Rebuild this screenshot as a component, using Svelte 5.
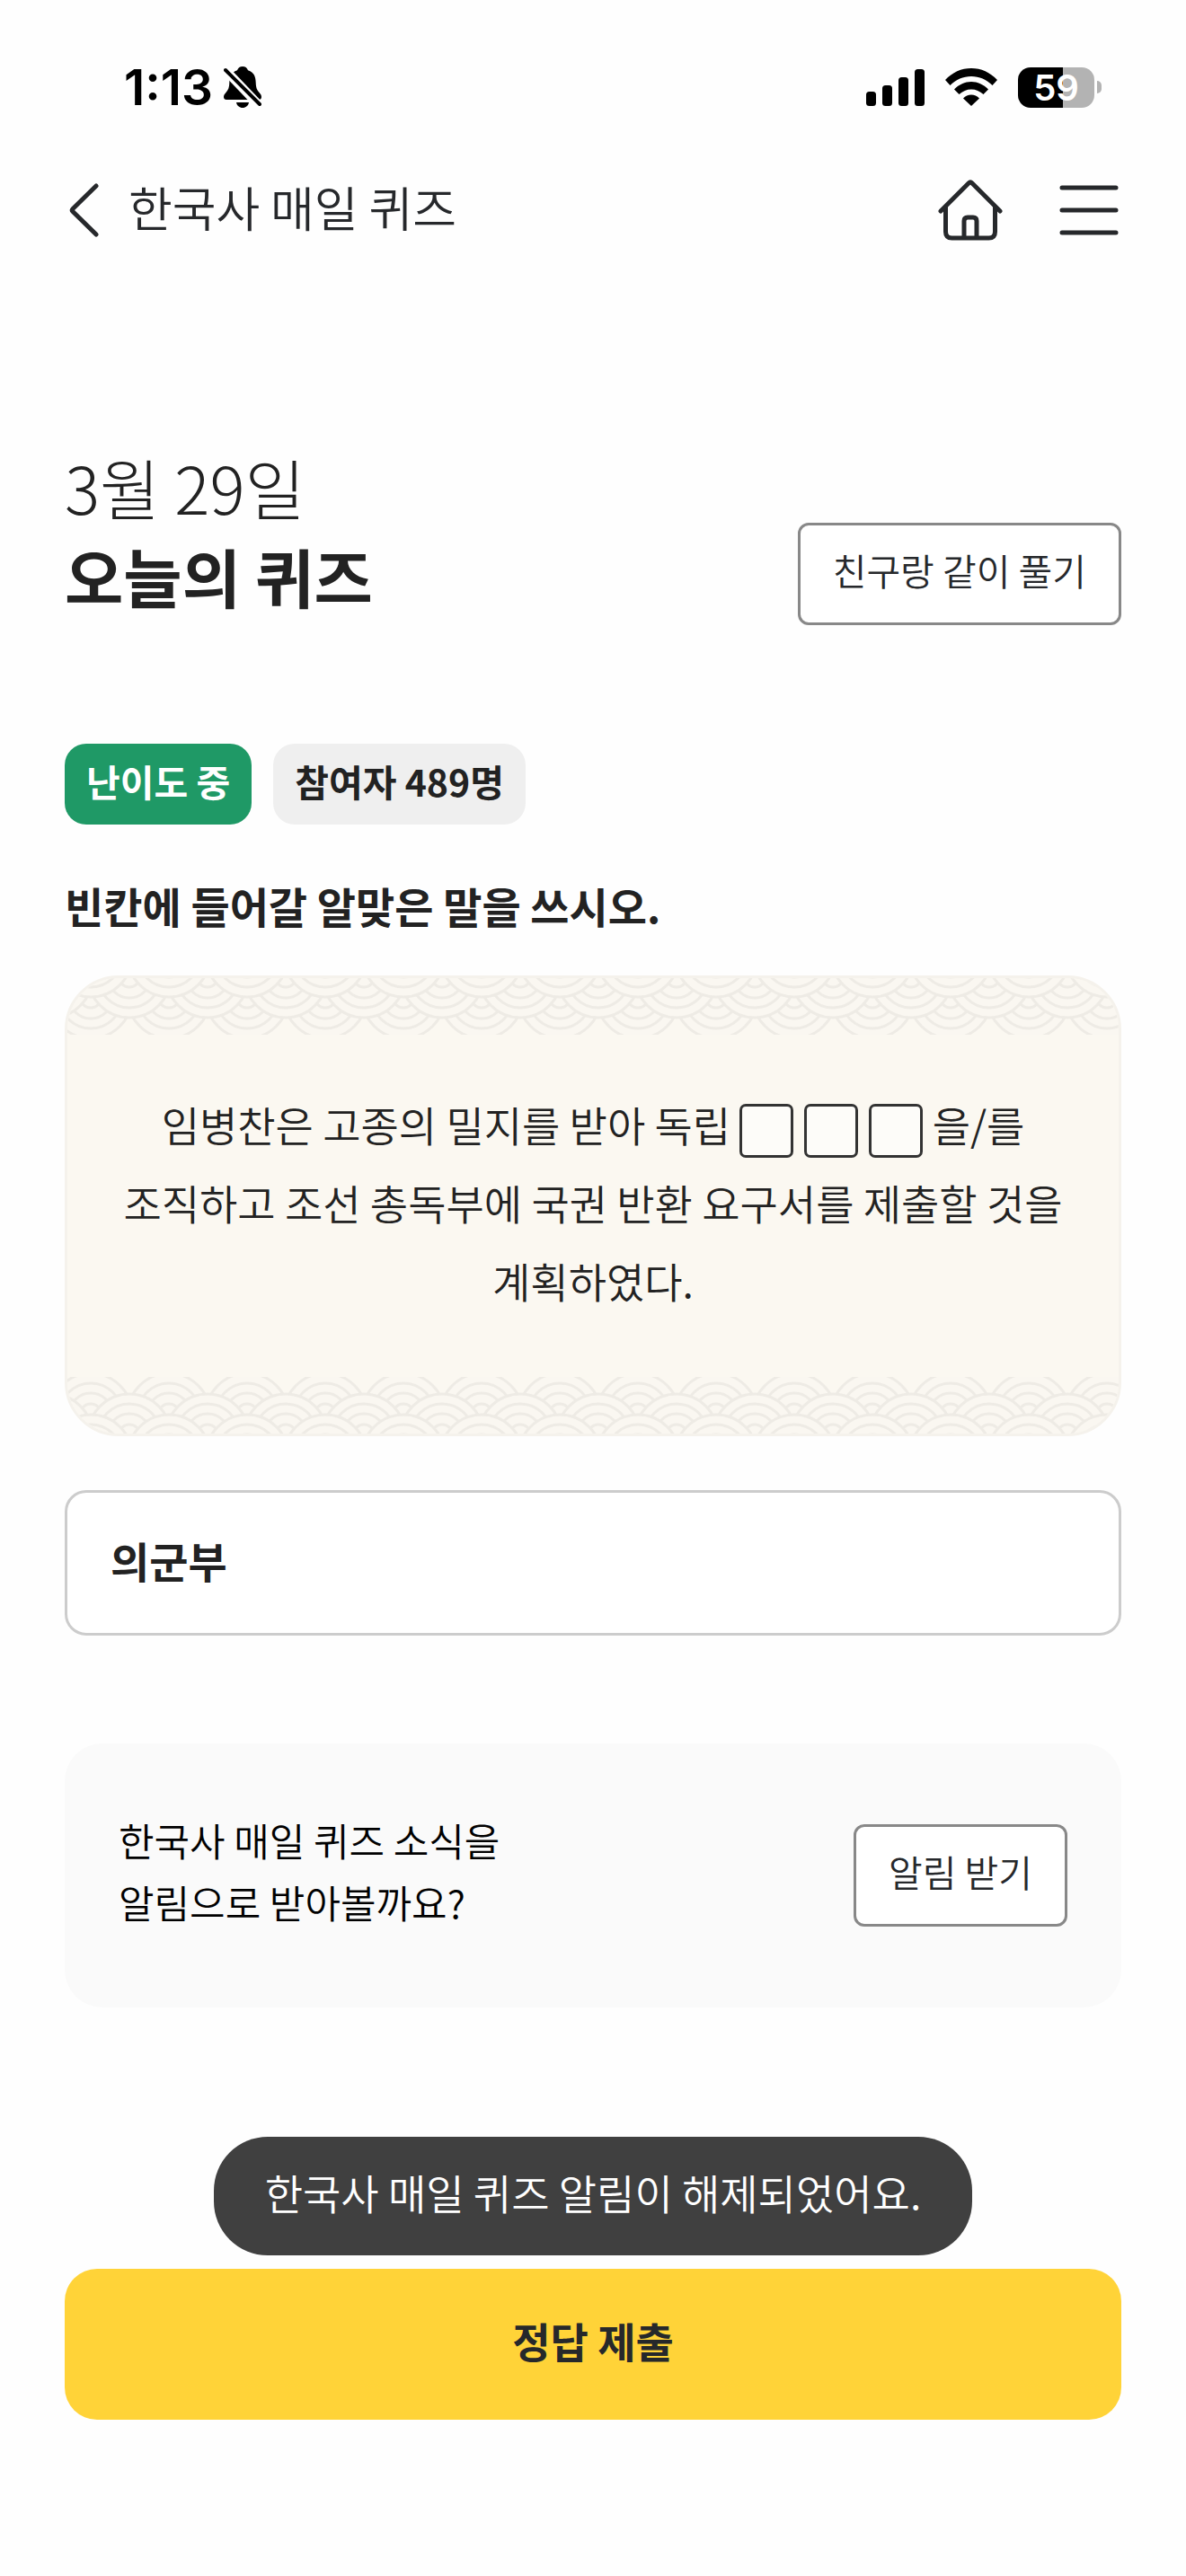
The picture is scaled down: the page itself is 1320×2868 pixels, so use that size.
<script lang="ts">
	let answer = $state('의군부');

	const participants = 489;
	const blanks = [1, 2, 3];

	// wave rows are painted bottom row first so that each upper row covers the one below
	const waveRows = [
		{ y: 21, xs: [-61, 26, 113] },
		{ y: -2, xs: [-18, 69, 156] },
		{ y: -25, xs: [-61, 26, 113] }
	];
	const waveRings = [46, 35, 24, 12];
</script>

{#snippet waves(id: string)}
	<svg class="waves {id}" aria-hidden="true">
		<defs>
			<pattern {id} width="87" height="63" patternUnits="userSpaceOnUse">
				{#each waveRows as row}
					{#each row.xs as x}
						{#each waveRings as r}
							<circle cx={x} cy={row.y} {r} />
						{/each}
					{/each}
				{/each}
			</pattern>
		</defs>
		<rect width="100%" height="63" fill="url(#{id})" />
	</svg>
{/snippet}

<div class="screen">
	<div class="status-bar">
		<div class="status-left">
			<span class="time">1:13</span>
			<svg width="42" height="46" viewBox="0 0 42 46" aria-hidden="true">
				<path d="M21 0c-3 0-5 1.600-6 4.200C8 6.500 6.500 11.500 6.300 18c-.2 6-1.300 8-4 11.300C.8 31 0 32.300 0 34c0 1.800 1.200 3 3 3h36c1.800 0 3-1.200 3-3 0-1.700-.8-3-2.300-4.700-2.700-3.300-3.800-5.300-4-11.300C35.500 11.500 34 6.500 27 4.200 26 1.600 24 0 21 0z" />
				<path d="M14 40h14c-.5 3.500-3.500 6-7 6s-6.500-2.500-7-6z" />
				<path d="M-1 1L42 46" stroke="#fff" stroke-width="10" />
				<path d="M2 4l38 38" stroke="#000" stroke-width="4" stroke-linecap="round" />
			</svg>
		</div>
		<div class="status-right">
			<svg width="65" height="41" viewBox="0 0 65 41" aria-hidden="true">
				<rect x="0" y="25" width="11" height="16" rx="3.500" />
				<rect x="18" y="18" width="11" height="23" rx="3.500" />
				<rect x="36" y="9" width="11" height="32" rx="3.500" />
				<rect x="54" y="0" width="11" height="41" rx="3.500" />
			</svg>
			<svg width="58" height="42" viewBox="0 0 58 42" aria-hidden="true">
				<path d="M0 13C8 4.500 18 0 29 0s21 4.500 29 13l-5.500 6C46 12.500 38 9 29 9S12 12.500 5.500 19z" />
				<path d="M10 23.500C15.500 18 22 15 29 15s13.500 3 19 8.500l-5.500 5.500C38.500 25.500 34 23.500 29 23.500S19.500 25.500 15.500 29z" />
				<path d="M20 33.500c2.500-2.500 5.500-4 9-4s6.500 1.500 9 4L29 42z" />
			</svg>
			<div class="battery">
				<div class="battery-body">59</div>
				<div class="battery-tip"></div>
			</div>
		</div>
	</div>

	<header>
		<button class="icon-btn" type="button" aria-label="뒤로">
			<svg width="33" height="60" viewBox="0 0 33 60" aria-hidden="true">
				<path d="M30 3L4 28.500q-1.500 1.500 0 3L30 57" />
			</svg>
		</button>
		<h1>한국사 매일 퀴즈</h1>
		<a class="icon-btn home" href="/" aria-label="홈">
			<svg width="72" height="68" viewBox="0 0 72 68" aria-hidden="true">
				<path d="M3 35L34 4q2-2 4 0l31 31" />
				<path d="M8.500 31v27q0 7 7 7h41q7 0 7-7V31" />
				<path d="M29 64V46q0-4 4-4h6q4 0 4 4v18" />
			</svg>
		</a>
		<button class="icon-btn" type="button" aria-label="메뉴">
			<svg width="66" height="56" viewBox="0 0 66 56" aria-hidden="true">
				<path d="M3 3h60M3 28h60M3 53h60" />
			</svg>
		</button>
	</header>

	<main>
		<div class="title-row">
			<h2><span>3월 29일</span>오늘의 퀴즈</h2>
			<button class="outline-btn" type="button">친구랑 같이 풀기</button>
		</div>

		<div class="badges">
			<span class="badge level">난이도 중</span>
			<span class="badge">참여자 {participants}명</span>
		</div>

		<label class="question" for="answer">빈칸에 들어갈 알맞은 말을 쓰시오.</label>

		<section class="quiz-card">
			{@render waves('top')}
			<p>
				임병찬은 고종의 밀지를 받아 독립
				<span class="blanks">
					{#each blanks as blank (blank)}
						<span class="blank"></span>
					{/each}
				</span>
				을/를 조직하고 조선 총독부에 국권 반환 요구서를 제출할 것을 계획하였다.
			</p>
			{@render waves('bottom')}
		</section>

		<input id="answer" type="text" bind:value={answer} />

		<section class="notice">
			<p>한국사 매일 퀴즈 소식을<br />알림으로 받아볼까요?</p>
			<button class="outline-btn" type="button">알림 받기</button>
		</section>

		<div class="toast" role="status">한국사 매일 퀴즈 알림이 해제되었어요.</div>

		<button class="submit" type="button">정답 제출</button>
	</main>
</div>

<style>
	:global(body) {
		margin: 0;
		background: #fefefe;
	}

	.screen {
		font-family: 'Noto Sans CJK KR', sans-serif;
		font-weight: 350;
		color: #222;
		padding-bottom: 174px;
		word-break: keep-all;
	}

	button,
	input {
		font: inherit;
		color: inherit;
		box-sizing: border-box;
	}

	button {
		cursor: pointer;
	}

	h1,
	h2,
	p {
		margin: 0;
		font-weight: inherit;
	}

	.status-bar {
		display: flex;
		justify-content: space-between;
		align-items: center;
		height: 48px;
		padding: 73px 94px 0 138px;
		font-family: Inter, sans-serif;
		color: #000;
	}

	.status-left,
	.status-right {
		display: flex;
		align-items: center;
	}

	.status-left {
		gap: 12px;
	}

	.status-right {
		gap: 23px;
	}

	.time {
		font-size: 55px;
		line-height: 48px;
		font-weight: 600;
	}

	.battery {
		display: flex;
		align-items: center;
		gap: 3px;
	}

	.battery-body {
		width: 85px;
		height: 45px;
		border-radius: 14px;
		background: linear-gradient(90deg, #000 59%, #b3b3b3 59%);
		color: #fff;
		font-size: 40px;
		font-weight: 600;
		line-height: 45px;
		text-align: center;
	}

	.battery-tip {
		width: 5px;
		height: 14px;
		border-radius: 0 5px 5px 0;
		background: #b3b3b3;
	}

	header {
		display: flex;
		align-items: center;
		height: 96px;
		padding: 65px 75px 0 77px;
		color: #26282b;
	}

	h1 {
		flex: 1;
		margin-left: 33px;
		padding-bottom: 8px;
		font-size: 53px;
		line-height: 72px;
	}

	.icon-btn {
		display: flex;
		padding: 0;
		border: none;
		background: none;
		color: inherit;
	}

	.icon-btn svg {
		fill: none;
		stroke: currentColor;
		stroke-width: 5;
		stroke-linecap: round;
		stroke-linejoin: round;
	}

	.home {
		margin-right: 63px;
	}

	main {
		display: flex;
		flex-direction: column;
		padding: 210px 72px 0;
	}

	.title-row {
		display: flex;
		justify-content: space-between;
		align-items: flex-end;
	}

	h2 {
		font-size: 71px;
		line-height: 99px;
		font-weight: 700;
		padding-bottom: 6px;
	}

	h2 span {
		display: block;
		font-size: 73px;
		font-weight: 300;
	}

	.outline-btn {
		height: 114px;
		padding: 0 36px 11px;
		border: 3px solid #888;
		border-radius: 12px;
		background: #fff;
		color: #26282b;
		font-size: 41px;
		line-height: 60px;
	}

	.badges {
		display: flex;
		gap: 24px;
		margin-top: 132px;
	}

	.badge {
		padding: 11px 24px 19px;
		border-radius: 24px;
		background: #efefef;
		font-size: 41px;
		line-height: 60px;
		font-weight: 700;
	}

	.level {
		background: #1f9966;
		color: #fff;
	}

	.question {
		margin-top: 57px;
		font-size: 47px;
		line-height: 66px;
		font-weight: 700;
	}

	.quiz-card {
		margin-top: 45px;
		border: 3px solid #f5f2ec;
		border-radius: 60px;
		background: #fbf8f1;
		overflow: hidden;
	}

	.quiz-card p {
		padding: 56px 48px 64px;
		font-size: 46px;
		line-height: 87px;
		text-align: center;
	}

	.waves {
		display: block;
		width: 100%;
		height: 63px;
	}

	.waves circle {
		fill: #faf7f1;
		stroke: #eeebe5;
		stroke-width: 3;
	}

	.waves.bottom {
		transform: scaleY(-1);
	}

	.blanks {
		display: inline-flex;
		gap: 12px;
		vertical-align: middle;
	}

	.blank {
		box-sizing: border-box;
		width: 60px;
		height: 60px;
		border: 3px solid #333;
		border-radius: 7px;
		background: #fdfcf9;
	}

	input {
		width: 100%;
		height: 162px;
		margin-top: 60px;
		padding: 0 48px 8px;
		border: 3px solid #ccc;
		border-radius: 24px;
		background: #fff;
		font-size: 47px;
		font-weight: 700;
	}

	.notice {
		display: flex;
		justify-content: space-between;
		align-items: center;
		height: 294px;
		margin-top: 120px;
		padding: 0 60px;
		border-radius: 42px;
		background: #fafafa;
		color: #000;
	}

	.notice p {
		padding-bottom: 11px;
		font-size: 43px;
		line-height: 69px;
	}

	.toast {
		align-self: center;
		margin-top: 144px;
		padding: 26px 57px 36px;
		border-radius: 60px;
		background: #404040;
		color: #fff;
		font-size: 46px;
		line-height: 70px;
	}

	.submit {
		height: 168px;
		margin-top: 15px;
		padding: 0 0 11px;
		border: none;
		border-radius: 36px;
		background: #ffd338;
		color: #26282b;
		font-size: 46px;
		font-weight: 700;
	}
</style>
